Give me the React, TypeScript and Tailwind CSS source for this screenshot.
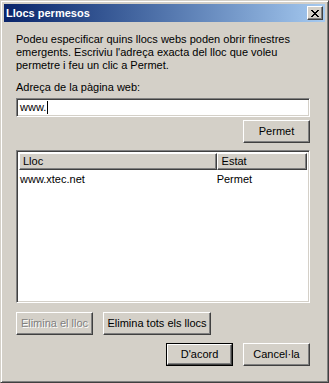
// Classic Windows 2000 style dialog: "Llocs permesos"

const font = "font-['Tahoma','Liberation_Sans',Arial,sans-serif]";

// raised 3D bevel used by buttons and list headers
const raised =
  "border border-t-white border-l-white border-b-[#404040] border-r-[#404040] shadow-[inset_-1px_-1px_#808080]";

// sunken 3D bevel used by text box and list view
const sunken =
  "border border-t-[#808080] border-l-[#808080] border-b-white border-r-white shadow-[inset_1px_1px_#404040,inset_-1px_-1px_#d4d0c8]";

function CloseGlyph() {
  const rows = ["11000011", "01100110", "00111100", "00011000", "00111100", "01100110", "11000011"];
  return (
    <svg width="8" height="7" viewBox="0 0 8 7" shapeRendering="crispEdges">
      {rows.flatMap((r, y) =>
        r.split("").map((c, x) => (c === "1" ? <rect key={`${x}-${y}`} x={x} y={y} width="1" height="1" fill="#000" /> : null))
      )}
    </svg>
  );
}

function Button({
  label,
  width,
  disabled = false,
  isDefault = false,
}: {
  label: string;
  width: number;
  disabled?: boolean;
  isDefault?: boolean;
}) {
  const inner = (
    <div
      className={`h-full w-full bg-[#d4d0c8] ${raised} flex items-center justify-center text-[11px] leading-[13px] ${
        disabled ? "text-[#808080] [text-shadow:1px_1px_#fff]" : "text-black"
      }`}
    >
      {label}
    </div>
  );
  if (isDefault) {
    return (
      <div className="h-[23px] border border-black" style={{ width }}>
        {inner}
      </div>
    );
  }
  return (
    <div className="h-[23px]" style={{ width }}>
      {inner}
    </div>
  );
}

export default function App() {
  return (
    <div
      className={`${font} w-[329px] h-[383px] bg-[#d4d0c8] border border-t-[#d4d0c8] border-l-[#d4d0c8] border-b-[#404040] border-r-[#404040] shadow-[inset_1px_1px_#fff,inset_-1px_-1px_#808080] p-[3px] flex flex-col`}
    >
      {/* Title bar */}
      <div className="h-[18px] shrink-0 flex items-center justify-between pl-[2px] pr-[2px] bg-gradient-to-r from-[#0a246a] to-[#a6caf0]">
        <span className="text-white font-bold text-[11px] leading-[13px]">Llocs permesos</span>
        <div className={`w-[16px] h-[14px] bg-[#d4d0c8] ${raised} flex items-center justify-center`}>
          <CloseGlyph />
        </div>
      </div>

      {/* Body */}
      <div className="pl-[12px] pr-[15px] flex flex-col text-black text-[11px] leading-[13px]">
        <p className="mt-[11px] whitespace-nowrap">
          Podeu especificar quins llocs webs poden obrir finestres
          <br />
          emergents. Escriviu l'adreça exacta del lloc que voleu
          <br />
          permetre i feu un clic a Permet.
        </p>

        <div className="mt-[9px]">Adreça de la pàgina web:</div>

        {/* URL text box */}
        <div className={`mt-[4px] h-[19px] bg-white ${sunken} flex items-center pl-[3px]`}>
          <span>www.</span>
          <span className="w-px h-[13px] bg-black ml-[1px]" />
        </div>

        <div className="mt-[3px] flex justify-end">
          <Button label="Permet" width={67} />
        </div>

        {/* List view */}
        <div className={`mt-[7px] h-[153px] bg-white ${sunken} p-[2px] flex flex-col`}>
          <div className="flex h-[17px] shrink-0">
            <div className={`w-[199px] bg-[#d4d0c8] ${raised} pl-[3px] flex items-center`}>Lloc</div>
            <div className={`w-[91px] bg-[#d4d0c8] ${raised} pl-[4px] flex items-center`}>Estat</div>
          </div>
          <div className="flex pt-[3px]">
            <div className="w-[199px] pl-[1px]">www.xtec.net</div>
            <div className="w-[91px]">Permet</div>
          </div>
        </div>

        <div className="mt-[9px] flex gap-[10px]">
          <Button label="Elimina el lloc" width={77} disabled />
          <Button label="Elimina tots els llocs" width={108} />
        </div>

        <div className="mt-[8px] flex justify-end gap-[10px]">
          <Button label="D'acord" width={67} isDefault />
          <Button label="Cancel·la" width={67} />
        </div>
      </div>
    </div>
  );
}
